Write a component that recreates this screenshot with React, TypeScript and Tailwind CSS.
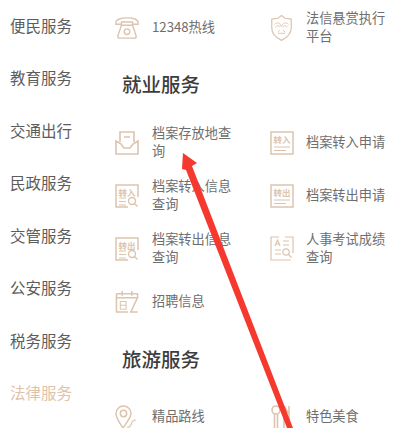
const font = 'font-["Noto_Sans_CJK_SC","Noto_Sans",sans-serif]';

const sideItems = ['便民服务', '教育服务', '交通出行', '民政服务', '交管服务', '公安服务', '税务服务', '法律服务'];

function Phone() {
  return (
    <svg width="24" height="24" viewBox="0 0 26 26" fill="none" stroke="#dcc4ae" strokeWidth="1.5">
      <path d="M1 7c0-3 5-5 12-5s12 2 12 5v2h-6V6.500H7V9H1z" />
      <path d="M7 10h12l4 12a2 2 0 0 1-2 2H5a2 2 0 0 1-2-2z" />
      <circle cx="13" cy="17" r="3" />
    </svg>
  );
}

function Mask() {
  return (
    <svg width="23" height="28" viewBox="0 0 26 30" fill="none" stroke="#dcc4ae" strokeWidth="1.4">
      <path d="M13 1l4 3 7 1v10c0 7-5 11-11 14C7 26 2 22 2 15V5l7-1z" />
      <path d="M5 11c3-3 6-2 8 2 2-4 5-5 8-2M6 14c2-2 5-2 6 0M14 14c2-2 5-2 6 0M9 21h8M11 17l-2 3M15 17l2 3" strokeWidth="1" />
    </svg>
  );
}

function Inbox() {
  return (
    <svg width="24" height="25" viewBox="0 0 24 25" fill="none" stroke="#dcc4ae" strokeWidth="1.6">
      <path d="M5 12V2h14v10M9 7h6" />
      <path d="M1 11v13h22V11l-5 3-3 4H9l-3-4z" />
    </svg>
  );
}

function DocIcon({ label, search }: { label: string; search?: boolean }) {
  return (
    <div className="relative w-6 h-6">
      {search ? (
        <svg width="24" height="24" viewBox="0 0 24 24" fill="none" stroke="#dcc4ae" strokeWidth="1.4">
          <path d="M23 13V1H1v22h12" strokeWidth="1.500" />
          <path d="M4 14h7M4 17.500h7M4 21h7" strokeWidth="1.200" />
          <circle cx="17" cy="17" r="3.500" />
          <path d="M19.500 19.500l3 3" />
        </svg>
      ) : (
        <svg width="24" height="24" viewBox="0 0 24 24" fill="none" stroke="#dcc4ae" strokeWidth="1.5">
          <path d="M1 1h22v22H1z" />
          <path d="M4 16h16M4 19.500h12" strokeWidth="1.200" />
        </svg>
      )}
      <span className="absolute left-0 right-0 top-[3px] text-center text-[8.500px] leading-[10px] font-bold text-[#dcc4ae]">
        {label}
      </span>
    </div>
  );
}

function Exam() {
  return (
    <svg width="24" height="26" viewBox="0 0 24 26" fill="none" stroke="#dcc4ae" strokeWidth="1.2">
      <path d="M15 1h8v16M1 4v20h20M1 4V1h8" />
      <path d="M5 10l2.500-6L10 10M6 8h3M13 5h6M13 9h6M5 14h6M5 18h6" />
      <circle cx="16" cy="16" r="3.200" />
      <path d="M18.500 18.500l3 3" />
    </svg>
  );
}

function Calendar() {
  return (
    <svg width="24" height="23" viewBox="0 0 24 24" fill="none" stroke="#dcc4ae" strokeWidth="1.6">
      <path d="M7 1v5M17 1v5M1 4h22v4M1 8h22M1 4v19h12M23 8l-7 15h7" />
      <path d="M5 12h6v8H5zM5 16h6" strokeWidth="1.1" />
    </svg>
  );
}

function Pin() {
  return (
    <svg width="24" height="24" viewBox="0 0 24 24" fill="none" stroke="#dcc4ae" strokeWidth="1.5">
      <path d="M8 23C3 16 1 12 1 8.500a7.500 7.500 0 0 1 15 0C16 12 13 16 8 23z" />
      <circle cx="8.500" cy="8.500" r="3.200" />
      <path d="M12 22c4 1 4-3 5-5s3-2 4-2" strokeWidth="1.2" />
    </svg>
  );
}

function Food() {
  return (
    <svg width="22" height="24" viewBox="0 0 22 24" fill="none" stroke="#dcc4ae" strokeWidth="1.6">
      <circle cx="6" cy="5" r="4" />
      <path d="M4.500 9v15M7.500 9v15M14 1v23M19 1v23M14 1l5 8" />
    </svg>
  );
}

function Item({ icon, text, iconWidth = 'w-[37px]' }: { icon: React.ReactNode; text: string; iconWidth?: string }) {
  return (
    <div className="flex items-center h-[35px]">
      <div className={`${iconWidth} shrink-0`}>{icon}</div>
      <p className="text-[13.200px] leading-[17.500px] pb-[2px] text-[#6e6e6e] w-[84px]">{text}</p>
    </div>
  );
}

function Heading({ children }: { children: string }) {
  return <h2 className="text-[19.5px] leading-[28px] font-medium text-[#3d3d3d] pl-[7px]">{children}</h2>;
}

export default function App() {
  return (
    <div className={`${font} relative w-[410px] h-[428px] overflow-hidden bg-white flex`}>
      <div className="w-[115px] shrink-0 pl-[10px] pt-[13.500px] flex flex-col gap-[29.500px]">
        {sideItems.map((item) => (
          <p
            key={item}
            className={`text-[15.500px] leading-[23px] ${item === '法律服务' ? 'text-[#dfc3a8]' : 'text-[#5c5c5c]'}`}
          >
            {item}
          </p>
        ))}
      </div>

      <div className="flex-1 pt-[10px]">
        <div className="grid grid-cols-[155px_1fr]">
          <Item icon={<Phone />} text="12348热线" />
          <Item icon={<Mask />} text="法信悬赏执行平台" iconWidth="w-[36px]" />
        </div>

        <div className="mt-[25px] mb-[27px]">
          <Heading>就业服务</Heading>
        </div>

        <div className="grid grid-cols-[155px_1fr] gap-y-[18px]">
          <Item icon={<Inbox />} text="档案存放地查询" />
          <Item icon={<DocIcon label="转入" />} text="档案转入申请" iconWidth="w-[36px]" />
          <Item icon={<DocIcon label="转入" search />} text="档案转入信息查询" />
          <Item icon={<DocIcon label="转出" />} text="档案转出申请" iconWidth="w-[36px]" />
          <Item icon={<DocIcon label="转出" search />} text="档案转出信息查询" />
          <Item icon={<Exam />} text="人事考试成绩查询" iconWidth="w-[36px]" />
          <Item icon={<Calendar />} text="招聘信息" />
        </div>

        <div className="mt-[25.500px] mb-[27px]">
          <Heading>旅游服务</Heading>
        </div>

        <div className="grid grid-cols-[155px_1fr]">
          <Item icon={<Pin />} text="精品路线" />
          <Item icon={<Food />} text="特色美食" iconWidth="w-[36px]" />
        </div>
      </div>

      <svg className="absolute left-0 top-0" width="410" height="428" viewBox="0 0 410 428" fill="#f5392f">
        <path d="M183 153L197 163L192 166L293 428L287 428L186 170L182 169Z" />
      </svg>
    </div>
  );
}
